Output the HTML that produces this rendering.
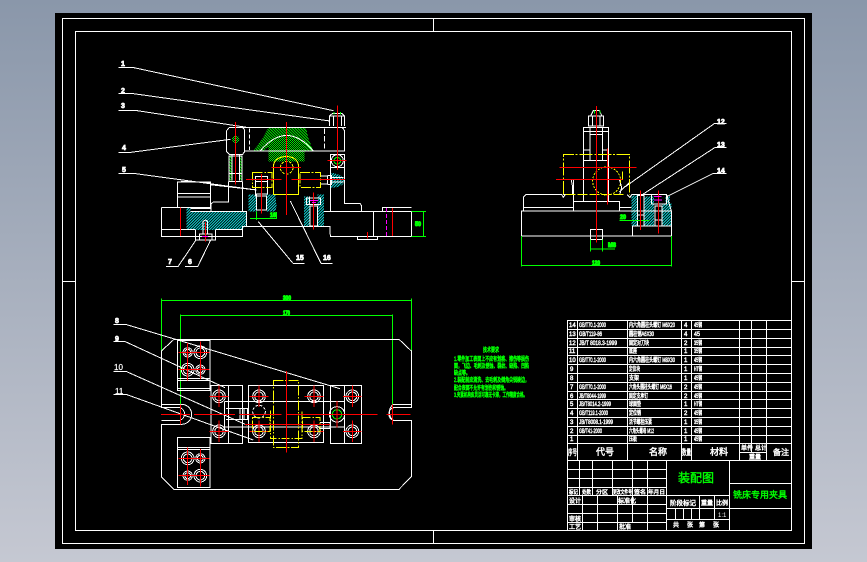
<!DOCTYPE html>
<html><head><meta charset="utf-8"><title>装配图</title>
<style>
html,body{margin:0;padding:0;width:867px;height:562px;overflow:hidden;background:linear-gradient(180deg,#8a97aa,#c5c8d2)}
svg{position:absolute;left:0;top:0;display:block}
text{font-family:"Liberation Sans","WenQuanYi Zen Hei","Noto Sans CJK SC",sans-serif}
.w{fill:none;stroke:#fff;stroke-width:3}
.r{fill:none;stroke:#f00;stroke-width:3}
.y{fill:none;stroke:#ff0;stroke-width:3}
.g{fill:none;stroke:#0f0;stroke-width:3}
.m{fill:none;stroke:#f0f;stroke-width:3}
.t text{fill:#fff;stroke:#fff;stroke-width:.45;font-size:6px}
.l text{fill:#fff;stroke:#fff;stroke-width:.7;font-size:7px;font-weight:bold}
.n text{fill:#0f0;stroke:#0f0;stroke-width:.55;font-size:6px}
.d text{fill:#0f0;stroke:#0f0;stroke-width:1.1;font-size:6.5px;font-weight:bold}
</style></head><body>
<svg width="867" height="562" viewBox="0 0 867 562" xmlns="http://www.w3.org/2000/svg" shape-rendering="crispEdges">
<defs>
<pattern id="hc" width="6" height="6" patternUnits="userSpaceOnUse" patternTransform="rotate(45)"><rect width="6" height="6" fill="#000"/><rect width="3" height="6" fill="#1dd"/></pattern>
<pattern id="hg" width="6" height="6" patternUnits="userSpaceOnUse" patternTransform="rotate(-45)"><rect width="6" height="6" fill="#000"/><rect width="3" height="6" fill="#0e0"/></pattern>
<pattern id="hd" width="6" height="6" patternUnits="userSpaceOnUse"><rect width="6" height="6" fill="#000"/><rect width="3" height="3" fill="#0e0"/><rect x="3" y="3" width="3" height="3" fill="#0e0"/></pattern>
<g id="b1"><circle r="19" class="w"/><circle r="13" class="w"/><path class="r" d="M-28 0H28M0-32V32"/></g>
<g id="b2"><circle r="14" class="w"/><circle r="9" class="w"/><path class="r" d="M-28 0H28M0-28V28"/></g>
</defs>

<rect x="55" y="13" width="757" height="536" fill="#000"/>
<g fill="none" stroke="#fff" stroke-width="1">
<rect x="62.5" y="18.5" width="742" height="525"/>
<rect x="75.5" y="31.5" width="716" height="499"/>
<path d="M433.5 18V31M433.5 531V544M62 281.5H75M792 281.5H805"/>
</g>

<!-- front view -->
<g transform="translate(100 50) scale(.33333)">
<path fill="url(#hg)" d="M460 303L490 262 505 233H618L625 265 640 303H610Q560 240 490 303Z"/>
<path fill="url(#hd)" d="M505 334V280Q560 235 614 280V334Z"/>
<rect x="388" y="318" width="8" height="74" fill="url(#hg)"/>
<rect x="418" y="318" width="8" height="74" fill="url(#hg)"/>
<circle cx="407" cy="268" r="11" fill="url(#hd)"/>
<path fill="url(#hc)" d="M260 472H272V484H440V520L428 540H260Z"/>
<path fill="url(#hc)" d="M446 434H470V484H446ZM500 434H526L530 470 526 484H500ZM612 440H628V528H612ZM652 434H672V528H652Z"/>
<path fill="url(#hc)" d="M690 368Q732 372 732 395 730 412 690 414Z"/>
<path class="w" d="M55 52H97L700 182M55 130H93L690 213M55 181H105L440 232M55 307H92L392 268M55 371H107L470 420"/>
<path class="w" d="M198 650H234L288 570M255 650H293L332 570M579 640H614M579 640L475 515M663 640H698M663 640L571 453"/>
<path class="w" d="M388 232H738M380 242L388 232H428L434 240V305L428 313H388L380 305ZM434 303H734V242L726 232"/>
<path class="w" d="M448 236V300" stroke-dasharray="12 6"/><path class="w" d="M673 236V300" stroke-dasharray="16 6"/>
<path class="w" d="M480 303Q560 210 640 303"/>
<path class="w" d="M688 228V198L698 190H726L734 198V228M700 198V228M724 198V228M688 198H734"/>
<path class="g" d="M702 186V194M722 186V194"/>
<path class="w" d="M387 318H426V394H387ZM396 315V392M418 315V392M387 370H428M396 392V372"/>
<path class="w" d="M691 313H734V352H691ZM691 352V484M734 352V460H780L785 468V484"/>
<circle cx="712" cy="332" r="18" class="w"/><circle cx="712" cy="332" r="10" class="g"/>
<path class="w" d="M233 396H332V472H233ZM233 430H332M233 441H332M243 394H265M310 398H330"/>
<path class="w" d="M385 394V456H340L333 462V484M428 394V484M330 404L470 420"/>
<path class="w" d="M184 472H272M272 476H332M272 484H440V530M184 472V560H428V530H690L691 560H934V484M184 538H285M348 538H428M672 484H934M820 484V558M847 484V472H934M773 560V568H832V560"/>
<path class="w" d="M286 538V570H347V538M298 552H336V570H298ZM309 552V514L316 510 323 514V552"/>
<path class="w" d="M466 380H503V432H470V480H500V438H466ZM466 395H503"/>
<path class="w" d="M620 444H662V464H620ZM630 468H652V528H630ZM628 440V464"/>
<path class="w" d="M662 378H682V402H662M682 376H695V404H682M695 382H730M695 396H730"/>
<path class="y" d="M520 434V350Q522 324 552 320H566Q594 324 596 350V434Z"/>
<path class="y" d="M458 368H516V412H458ZM600 368H662V412H600Z" stroke-dasharray="30 5 5 5"/>
<circle cx="560" cy="353" r="19" class="y" stroke-dasharray="8 4"/>
<path class="g" d="M934 484H978M934 560H978M970 484V560M450 506H530V486M469 484V510"/>
<path class="r" d="M559 216V495M407 216V404M712 166V360M682 331H740M514 352H603M438 388H545M575 388H735M241 472V558M877 474V558M484 372V490M316 516V574M640 428V538M802 546V566"/>
<path class="r" d="M859 474V558" style="stroke:#f0f" stroke-dasharray="12 6"/>
<path class="m" d="M306 560H324M630 452H654M636 458H648"/>
</g>
<g class="l">
<text x="121" y="66">1</text><text x="121" y="93">2</text><text x="121" y="108">3</text><text x="122" y="150">4</text><text x="122" y="172">5</text>
<text x="168" y="264">7</text><text x="188" y="264">6</text><text x="296" y="260">15</text><text x="323" y="260">16</text>
</g>

<!-- plan view -->
<g transform="translate(100 285) scale(.33333)">
<path class="g" d="M184 40V198M934 40V198M184 46H934M241 88V418M877 88V418M241 92H877"/>
<path class="w" d="M184 198L222 163H897L934 198V358H880M184 198V358H245A30 30 0 0 1 245 418H184V575L222 613H897L934 575V406H880A30 30 0 0 1 880 358M934 358V368H880A20 20 0 0 0 880 406H934M184 358V368H240A20 20 0 0 1 240 406H184"/>
<path class="w" d="M232 166H330V316H232ZM232 280H330M232 287H330M232 310H330M232 458H330V607H232ZM232 488H330M232 494H330"/>
<path class="w" d="M333 301H428V476H333ZM385 301V476M446 301H671V473H446ZM691 301H785V476H691ZM733 301V476"/>
<path class="w" d="M373 349H734M373 426H734M373 349V426M385 349V426M378 370H443V404H378M420 370V404M432 370V404"/>
<path class="w" d="M40 119H80L720 311M40 170H76L375 308M40 260H80L440 420M40 328H78L460 465"/>
<use href="#b2" x="263" y="202"/><use href="#b1" x="301" y="202"/><use href="#b1" x="263" y="254"/><use href="#b2" x="301" y="254"/>
<use href="#b1" x="263" y="520"/><use href="#b2" x="301" y="520"/><use href="#b2" x="263" y="572"/><use href="#b1" x="301" y="572"/>
<use href="#b1" x="357" y="334"/><use href="#b1" x="357" y="439"/><use href="#b1" x="477" y="334"/><use href="#b1" x="642" y="334"/><use href="#b1" x="477" y="439"/><use href="#b1" x="642" y="439"/><use href="#b1" x="757" y="334"/><use href="#b1" x="757" y="439"/>
<circle cx="477" cy="380" r="19" class="w" stroke-dasharray="8 5"/>
<circle cx="711" cy="388" r="23" class="w"/><circle cx="711" cy="388" r="14" class="g"/>
<path class="y" d="M520 287H596V488H520Z" stroke-dasharray="30 5 5 5"/>
<path class="y" d="M458 397H510V440H458ZM608 397H660V440H608ZM512 376V460H606V376" stroke-dasharray="24 5 5 5"/>
<path class="w" d="M660 412H690V430H660"/>
<path class="r" d="M183 388H270M282 388H405M418 388H545M558 388H832M860 388H932M559 258V503M241 358V418M877 358V418M435 418H690M711 348V428"/>
</g>
<g class="l">
<text x="115" y="323">8</text><text x="115" y="341">9</text><text x="114" y="370" style="font-size:8px;font-weight:normal;stroke-width:.2">10</text><text x="115" y="394" style="font-size:8px;font-weight:normal;stroke-width:.2">11</text>
</g>

<!-- side view -->
<g transform="translate(500 100)">
<g transform="scale(.33333)">
<path fill="url(#hc)" d="M394 286H412V378H394ZM432 290H462V378H432ZM486 310H514V378H486ZM496 286H510V310H496Z"/>
<path class="w" d="M272 48L280 32H298L306 48M265 48H311V78H265ZM277 48V78M300 48V78M250 82H326V182H250ZM250 95H326M270 82V182M307 82V182M250 150H270M307 150H326M270 104H307"/>
<path class="w" d="M250 182H326V304H250ZM70 333V292L78 283H185L190 292 196 283H189M220 304H358V333H220ZM220 238V333M70 322H220M358 322H395M214 240L218 262V283M358 238L365 262 360 282"/>
<path class="w" d="M64 333H514V408H64ZM64 408H271M308 408H514M271 388H308V418H271ZM397 378H514M397 378V408M382 284L390 292 395 284H500L510 320 514 333M358 276L388 248"/>
<path class="w" d="M412 286H432V378H412ZM412 345H432M455 284H500V312H455ZM465 318H486V378H465ZM465 360H486"/>
<path class="w" d="M376 260L644 70H680M430 282L644 143H680M500 290L640 220H680"/>
<path class="y" d="M190 283V163H388V283" stroke-dasharray="40 5 6 5"/><path class="y" d="M196 283H370" stroke-dasharray="30 6"/>
<path class="y" d="M367 214V240"/><circle cx="320" cy="243" r="42" class="y" stroke-dasharray="6 4"/>
<path class="g" d="M64 408V500M514 408V500M64 496H514M271 418V455M308 418V455M271 447H345M358 361H448M283 40V32M300 40V32"/>
<path class="r" d="M289 18V428M323 145V314M178 202H410M168 238H368M421 272V390M475 272V400"/>
<path class="m" d="M462 300H486M462 290H484"/>
</g>
</g>
<g class="l">
<text x="717" y="124">12</text><text x="717" y="147">13</text><text x="717" y="173">14</text>
</g>

<!-- dimension text -->
<g class="d" style="shape-rendering:auto">
<text x="283" y="300" textLength="8" lengthAdjust="spacingAndGlyphs">300</text>
<text x="283" y="315" textLength="7" lengthAdjust="spacingAndGlyphs">170</text>
<text x="270" y="217" textLength="6" lengthAdjust="spacingAndGlyphs">16</text>
<text x="415" y="226" textLength="6" lengthAdjust="spacingAndGlyphs">50</text>
<text x="608" y="247" textLength="8" lengthAdjust="spacingAndGlyphs">M8</text>
<text x="620" y="219" textLength="6" lengthAdjust="spacingAndGlyphs">20</text>
<text x="592" y="265" textLength="8" lengthAdjust="spacingAndGlyphs">120</text>
</g>

<!-- notes -->
<g class="n" style="shape-rendering:auto">
<text x="483" y="352" textLength="16" lengthAdjust="spacingAndGlyphs">技术要求</text>
<text x="454" y="361" textLength="75" lengthAdjust="spacingAndGlyphs">1.零件加工表面上不应有划痕、擦伤等损伤</text>
<text x="454" y="368" textLength="75" lengthAdjust="spacingAndGlyphs">面，飞边、毛刺及锈蚀、裂纹、缺陷、凹陷</text>
<text x="454" y="375" textLength="16" lengthAdjust="spacingAndGlyphs">缺点等。</text>
<text x="454" y="382" textLength="75" lengthAdjust="spacingAndGlyphs">2.装配前应清洗、去毛刺及倒角尖锐棱边，</text>
<text x="454" y="390" textLength="54" lengthAdjust="spacingAndGlyphs">配合表面不允许有划伤和锈蚀。</text>
<text x="454" y="397" textLength="73" lengthAdjust="spacingAndGlyphs">3.夹紧机构应灵活可靠无卡滞，工作精度合格。</text>
</g>

<!-- table -->
<g fill="none" stroke="#fff" stroke-width="1">
<path d="M567.5 320.5H791M567.5 329.5H791M567.5 338.5H791M567.5 347.5H791M567.5 355.5H791M567.5 364.5H791M567.5 373.5H791M567.5 382.5H791M567.5 391.5H791M567.5 399.5H791M567.5 408.5H791M567.5 417.5H791M567.5 426.5H791M567.5 435.5H791M567.5 443.5H791M567.5 460.5H791"/>
<path d="M567.5 320V531M577.5 320V461M627.5 320V461M681.5 320V461M691.5 320V461M739.5 320V461M751.5 320V452M766.5 320V461M739.5 452.5H766.5"/>
<path d="M567.5 469.5H666M567.5 478.5H666M567.5 487.5H666M567.5 495.5H666M567.5 504.5H666M567.5 513.5H666M567.5 522.5H666"/>
<path d="M579.5 461V496M592.5 461V496M612.5 461V496M632.5 461V522M647.5 461V531M666.5 461V531M582.5 496V531M597.5 496V531M617.5 496V531"/>
<path d="M666 495.5H729M666 508.5H729M666 519.5H729M729.5 461V531M729.5 483.5H791M729.5 508.5H791M699.5 496V519M714.5 496V519M675.5 509V519M683.5 509V519M691.5 509V519"/>
</g>
<g class="t" style="shape-rendering:auto">
<text x="569" y="327">14</text><text x="569" y="336">13</text><text x="569" y="345">12</text><text x="569" y="353">11</text><text x="569" y="362">10</text><text x="570" y="371">9</text><text x="570" y="380">8</text><text x="570" y="389">7</text><text x="570" y="398">6</text><text x="570" y="406">5</text><text x="570" y="415">4</text><text x="570" y="424">3</text><text x="570" y="433">2</text><text x="570" y="441">1</text>
<text x="579" y="327" textLength="27" lengthAdjust="spacingAndGlyphs">GB/T70.1-2000</text>
<text x="579" y="336" textLength="23" lengthAdjust="spacingAndGlyphs">GB/T119-86</text>
<text x="579" y="345" textLength="38" lengthAdjust="spacingAndGlyphs">JB/T 8018.3-1999</text>
<text x="579" y="362" textLength="27" lengthAdjust="spacingAndGlyphs">GB/T70.1-2000</text>
<text x="579" y="389" textLength="27" lengthAdjust="spacingAndGlyphs">GB/T70.1-2000</text>
<text x="579" y="398" textLength="27" lengthAdjust="spacingAndGlyphs">JB/T8044-1999</text>
<text x="579" y="406" textLength="32" lengthAdjust="spacingAndGlyphs">JB/T8014.2-1999</text>
<text x="579" y="415" textLength="29" lengthAdjust="spacingAndGlyphs">GB/T119.1-2000</text>
<text x="579" y="424" textLength="34" lengthAdjust="spacingAndGlyphs">JB/T8008.1-1999</text>
<text x="579" y="433" textLength="23" lengthAdjust="spacingAndGlyphs">GB/T41-2000</text>
<text x="629" y="327" textLength="46" lengthAdjust="spacingAndGlyphs">内六角圆柱头螺钉 M6X20</text>
<text x="629" y="336" textLength="25" lengthAdjust="spacingAndGlyphs">圆柱销A6X30</text>
<text x="629" y="345" textLength="20" lengthAdjust="spacingAndGlyphs">固定对刀块</text>
<text x="629" y="353" textLength="8" lengthAdjust="spacingAndGlyphs">底座</text>
<text x="629" y="362" textLength="46" lengthAdjust="spacingAndGlyphs">内六角圆柱头螺钉 M8X30</text>
<text x="629" y="371" textLength="11" lengthAdjust="spacingAndGlyphs">定位块</text>
<text x="629" y="380" textLength="10" lengthAdjust="spacingAndGlyphs">支架</text>
<text x="629" y="389" textLength="43" lengthAdjust="spacingAndGlyphs">六角头圆柱头螺钉 M6X16</text>
<text x="629" y="398" textLength="19" lengthAdjust="spacingAndGlyphs">固定支承钉</text>
<text x="629" y="406" textLength="12" lengthAdjust="spacingAndGlyphs">球面垫</text>
<text x="629" y="415" textLength="12" lengthAdjust="spacingAndGlyphs">定位销</text>
<text x="629" y="424" textLength="23" lengthAdjust="spacingAndGlyphs">活节螺栓压紧</text>
<text x="629" y="433" textLength="25" lengthAdjust="spacingAndGlyphs">六角头螺母 M12</text>
<text x="629" y="441" textLength="8" lengthAdjust="spacingAndGlyphs">压板</text>
<text x="684" y="327">4</text><text x="684" y="336">4</text><text x="684" y="345">2</text><text x="684" y="353">1</text><text x="684" y="362">1</text><text x="684" y="371">1</text><text x="684" y="380">1</text><text x="684" y="389">2</text><text x="684" y="398">2</text><text x="684" y="406">1</text><text x="684" y="415">2</text><text x="684" y="424">1</text><text x="684" y="433">1</text><text x="684" y="441">1</text>
<text x="694" y="327" textLength="8" lengthAdjust="spacingAndGlyphs">45钢</text><text x="694" y="336" textLength="6" lengthAdjust="spacingAndGlyphs">45</text><text x="694" y="345" textLength="8" lengthAdjust="spacingAndGlyphs">35钢</text><text x="694" y="353" textLength="8" lengthAdjust="spacingAndGlyphs">35钢</text><text x="694" y="362" textLength="8" lengthAdjust="spacingAndGlyphs">45钢</text><text x="694" y="371" textLength="8" lengthAdjust="spacingAndGlyphs">HT钢</text><text x="694" y="380" textLength="8" lengthAdjust="spacingAndGlyphs">45钢</text><text x="694" y="389" textLength="8" lengthAdjust="spacingAndGlyphs">45钢</text><text x="694" y="398" textLength="8" lengthAdjust="spacingAndGlyphs">45钢</text><text x="694" y="406" textLength="8" lengthAdjust="spacingAndGlyphs">HT钢</text><text x="694" y="415" textLength="8" lengthAdjust="spacingAndGlyphs">45钢</text><text x="694" y="424" textLength="8" lengthAdjust="spacingAndGlyphs">35钢</text><text x="694" y="433" textLength="8" lengthAdjust="spacingAndGlyphs">45钢</text><text x="694" y="441" textLength="8" lengthAdjust="spacingAndGlyphs">45钢</text>

<text x="568" y="455" style="font-size:8px" textLength="9" lengthAdjust="spacingAndGlyphs">序号</text>
<text x="596" y="455" style="font-size:9px">代号</text>
<text x="649" y="455" style="font-size:9px">名称</text>
<text x="682" y="455" style="font-size:8px" textLength="9" lengthAdjust="spacingAndGlyphs">数量</text>
<text x="710" y="455" style="font-size:9px">材料</text>
<text x="741" y="450" style="font-size:6px">单件</text><text x="755" y="450" style="font-size:6px">总计</text><text x="749" y="459" style="font-size:6px">重量</text>
<text x="773" y="455" style="font-size:8px">备注</text>
<text x="569" y="494" style="font-size:5.5px" textLength="9" lengthAdjust="spacingAndGlyphs">标记</text>
<text x="582" y="494" style="font-size:5.5px" textLength="9" lengthAdjust="spacingAndGlyphs">处数</text>
<text x="596" y="494" style="font-size:5.5px" textLength="12" lengthAdjust="spacingAndGlyphs">分区</text>
<text x="613" y="494" style="font-size:5.5px" textLength="19" lengthAdjust="spacingAndGlyphs">更改文件号</text>
<text x="634" y="494" style="font-size:5.5px" textLength="12" lengthAdjust="spacingAndGlyphs">签名</text>
<text x="648" y="494" style="font-size:5.5px" textLength="17" lengthAdjust="spacingAndGlyphs">年月日</text>
<text x="569" y="503" style="font-size:6px">设计</text>
<text x="618" y="503" style="font-size:6px">标准化</text>
<text x="569" y="521" style="font-size:6px">审核</text>
<text x="569" y="529" style="font-size:6px">工艺</text>
<text x="619" y="529" style="font-size:6px">批准</text>
<text x="670" y="505" style="font-size:6.5px" textLength="26" lengthAdjust="spacingAndGlyphs">阶段标记</text>
<text x="701" y="505" style="font-size:6px">重量</text><text x="716" y="505" style="font-size:6px">比例</text>
<text x="718" y="517" style="font-size:6px;stroke-width:0">1:1</text>
<text x="673" y="527" style="font-size:6px">共</text><text x="687" y="527" style="font-size:6px">张</text><text x="699" y="527" style="font-size:6px">第</text><text x="713" y="527" style="font-size:6px">张</text>
</g>
<g style="shape-rendering:auto">
<text x="678" y="482" fill="#0f0" stroke="#0f0" stroke-width=".4" style="font-size:12px">装配图</text>
<text x="733" y="498" fill="#0f0" stroke="#0f0" stroke-width=".4" style="font-size:9px">铣床专用夹具</text>
</g>
</svg>
</body></html>
